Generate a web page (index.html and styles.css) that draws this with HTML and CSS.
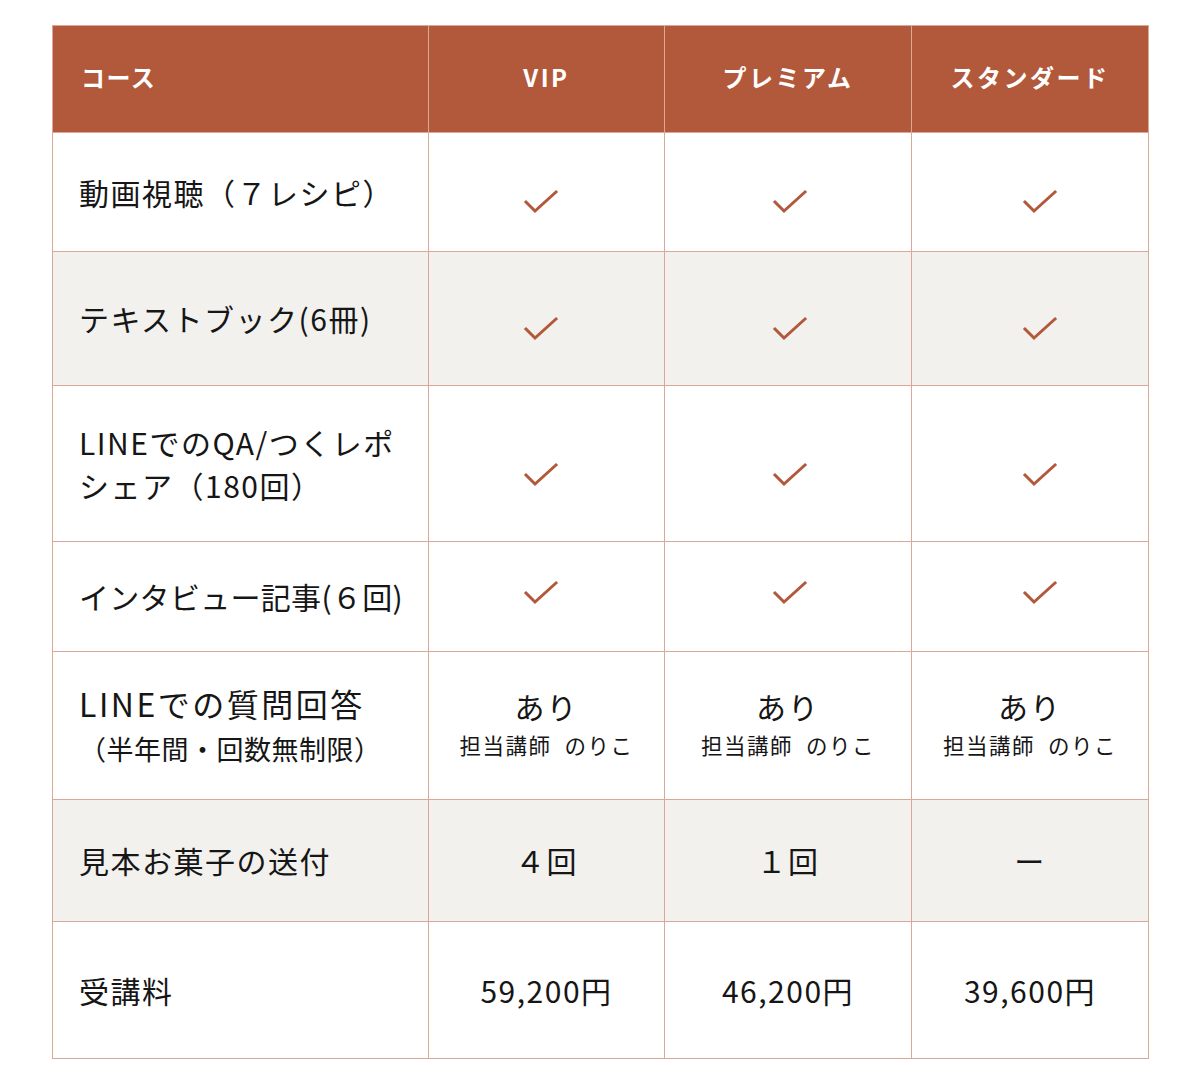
FILE: index.html
```html
<!DOCTYPE html>
<html lang="ja">
<head>
<meta charset="utf-8">
<link rel="stylesheet" href="styles.css">
</head>
<body>
<div class="wrap">
<table class="plan">
  <colgroup>
    <col class="c-label"><col class="c-vip"><col class="c-pre"><col class="c-std">
  </colgroup>
  <thead>
    <tr class="r-head">
      <th class="lbl">コース</th>
      <th>VIP</th>
      <th>プレミアム</th>
      <th>スタンダード</th>
    </tr>
  </thead>
  <tbody>
    <tr class="r1">
      <td class="lbl">動画視聴（７レシピ）</td>
      <td class="ck-vip"><svg class="chk" viewBox="0 0 36 26"><polyline points="3,13 12,22 33,3"/></svg></td>
      <td class="ck-pre"><svg class="chk" viewBox="0 0 36 26"><polyline points="3,13 12,22 33,3"/></svg></td>
      <td class="ck-std"><svg class="chk" viewBox="0 0 36 26"><polyline points="3,13 12,22 33,3"/></svg></td>
    </tr>
    <tr class="r2 alt">
      <td class="lbl">テキストブック(6冊)</td>
      <td class="ck-vip"><svg class="chk" viewBox="0 0 36 26"><polyline points="3,13 12,22 33,3"/></svg></td>
      <td class="ck-pre"><svg class="chk" viewBox="0 0 36 26"><polyline points="3,13 12,22 33,3"/></svg></td>
      <td class="ck-std"><svg class="chk" viewBox="0 0 36 26"><polyline points="3,13 12,22 33,3"/></svg></td>
    </tr>
    <tr class="r3">
      <td class="lbl">LINEでのQA/つくレポ<br>シェア（180回）</td>
      <td class="ck-vip"><svg class="chk" viewBox="0 0 36 26"><polyline points="3,13 12,22 33,3"/></svg></td>
      <td class="ck-pre"><svg class="chk" viewBox="0 0 36 26"><polyline points="3,13 12,22 33,3"/></svg></td>
      <td class="ck-std"><svg class="chk" viewBox="0 0 36 26"><polyline points="3,13 12,22 33,3"/></svg></td>
    </tr>
    <tr class="r4">
      <td class="lbl tight">インタビュー記事(６回)</td>
      <td class="ck-vip"><svg class="chk up" viewBox="0 0 36 26"><polyline points="3,13 12,22 33,3"/></svg></td>
      <td class="ck-pre"><svg class="chk up" viewBox="0 0 36 26"><polyline points="3,13 12,22 33,3"/></svg></td>
      <td class="ck-std"><svg class="chk up" viewBox="0 0 36 26"><polyline points="3,13 12,22 33,3"/></svg></td>
    </tr>
    <tr class="r5">
      <td class="lbl"><span class="big">LINEでの質問回答</span><br><span class="sub">（半年間・回数無制限）</span></td>
      <td class="two"><span class="ari">あり</span><span class="tch">担当講師<span class="gap"></span>のりこ</span></td>
      <td class="two"><span class="ari">あり</span><span class="tch">担当講師<span class="gap"></span>のりこ</span></td>
      <td class="two"><span class="ari">あり</span><span class="tch">担当講師<span class="gap"></span>のりこ</span></td>
    </tr>
    <tr class="r6 alt">
      <td class="lbl">見本お菓子の送付</td>
      <td class="txt">４回</td>
      <td class="txt">１回</td>
      <td class="txt">ー</td>
    </tr>
    <tr class="r7">
      <td class="lbl">受講料</td>
      <td class="txt num">59,200円</td>
      <td class="txt num">46,200円</td>
      <td class="txt num">39,600円</td>
    </tr>
  </tbody>
</table>
</div>
</body>
</html>
```

FILE: styles.css
```css
html, body {
  margin: 0;
  padding: 0;
  background: #ffffff;
}
body {
  font-family: "Noto Sans CJK JP", "Noto Sans", sans-serif;
  color: #161616;
}
.wrap {
  padding: 25px 0 0 52px;
}
.plan {
  border-collapse: collapse;
  width: 1096px;
  table-layout: fixed;
}
.c-label { width: 376px; }
.c-vip { width: 236px; }
.c-pre { width: 247px; }
.c-std { width: 237px; }

.plan th, .plan td {
  border: 1px solid #dba797;
  text-align: center;
  vertical-align: middle;
  padding: 0;
}
.plan th {
  background: #b2583b;
  color: #ffffff;
  font-size: 24px;
  font-weight: 700;
  letter-spacing: 2.5px;
  padding-bottom: 5px;
}
.plan th.lbl {
  text-align: left;
  padding-left: 28px;
  letter-spacing: 1.5px;
}
.plan td {
  font-size: 30px;
  letter-spacing: 1.5px;
  line-height: 43px;
}
.plan td.lbl {
  text-align: left;
  padding-left: 26px;
}
.plan td.tight {
  letter-spacing: 0.3px;
}
.alt td { background: #f2f1ee; }

.r-head { height: 107px; }
.r1 { height: 119px; }
.r2 { height: 134px; }
.r3 { height: 156px; }
.r4 { height: 110px; }
.r5 { height: 148px; }
.r6 { height: 122px; }
.r7 { height: 137px; }

.chk {
  width: 36px;
  height: 26px;
  display: block;
  margin: 20px auto 0;
  position: relative;
}
.ck-vip .chk { left: -6px; }
.ck-pre .chk { left: 2px; }
.ck-std .chk { left: 10px; }
.chk.up { margin-top: -8px; }
.r3 .chk { margin-top: 22px; }
.chk polyline {
  fill: none;
  stroke: #b2583b;
  stroke-width: 3;
  stroke-linecap: square;
}

.big {
  font-size: 32px;
  letter-spacing: 2.5px;
}
.sub {
  font-size: 27px;
  letter-spacing: 0.5px;
  display: inline-block;
  line-height: 36px;
}
.plan td.two {
  padding-bottom: 4px;
}
.ari {
  display: block;
  font-size: 30px;
  letter-spacing: 2px;
  line-height: 40px;
}
.tch {
  display: block;
  font-size: 21.5px;
  letter-spacing: 1.5px;
  line-height: 34px;
  margin-top: 2px;
}
.gap {
  display: inline-block;
  width: 13px;
}
.num {
  letter-spacing: 2px;
  font-size: 30px;
}
```
